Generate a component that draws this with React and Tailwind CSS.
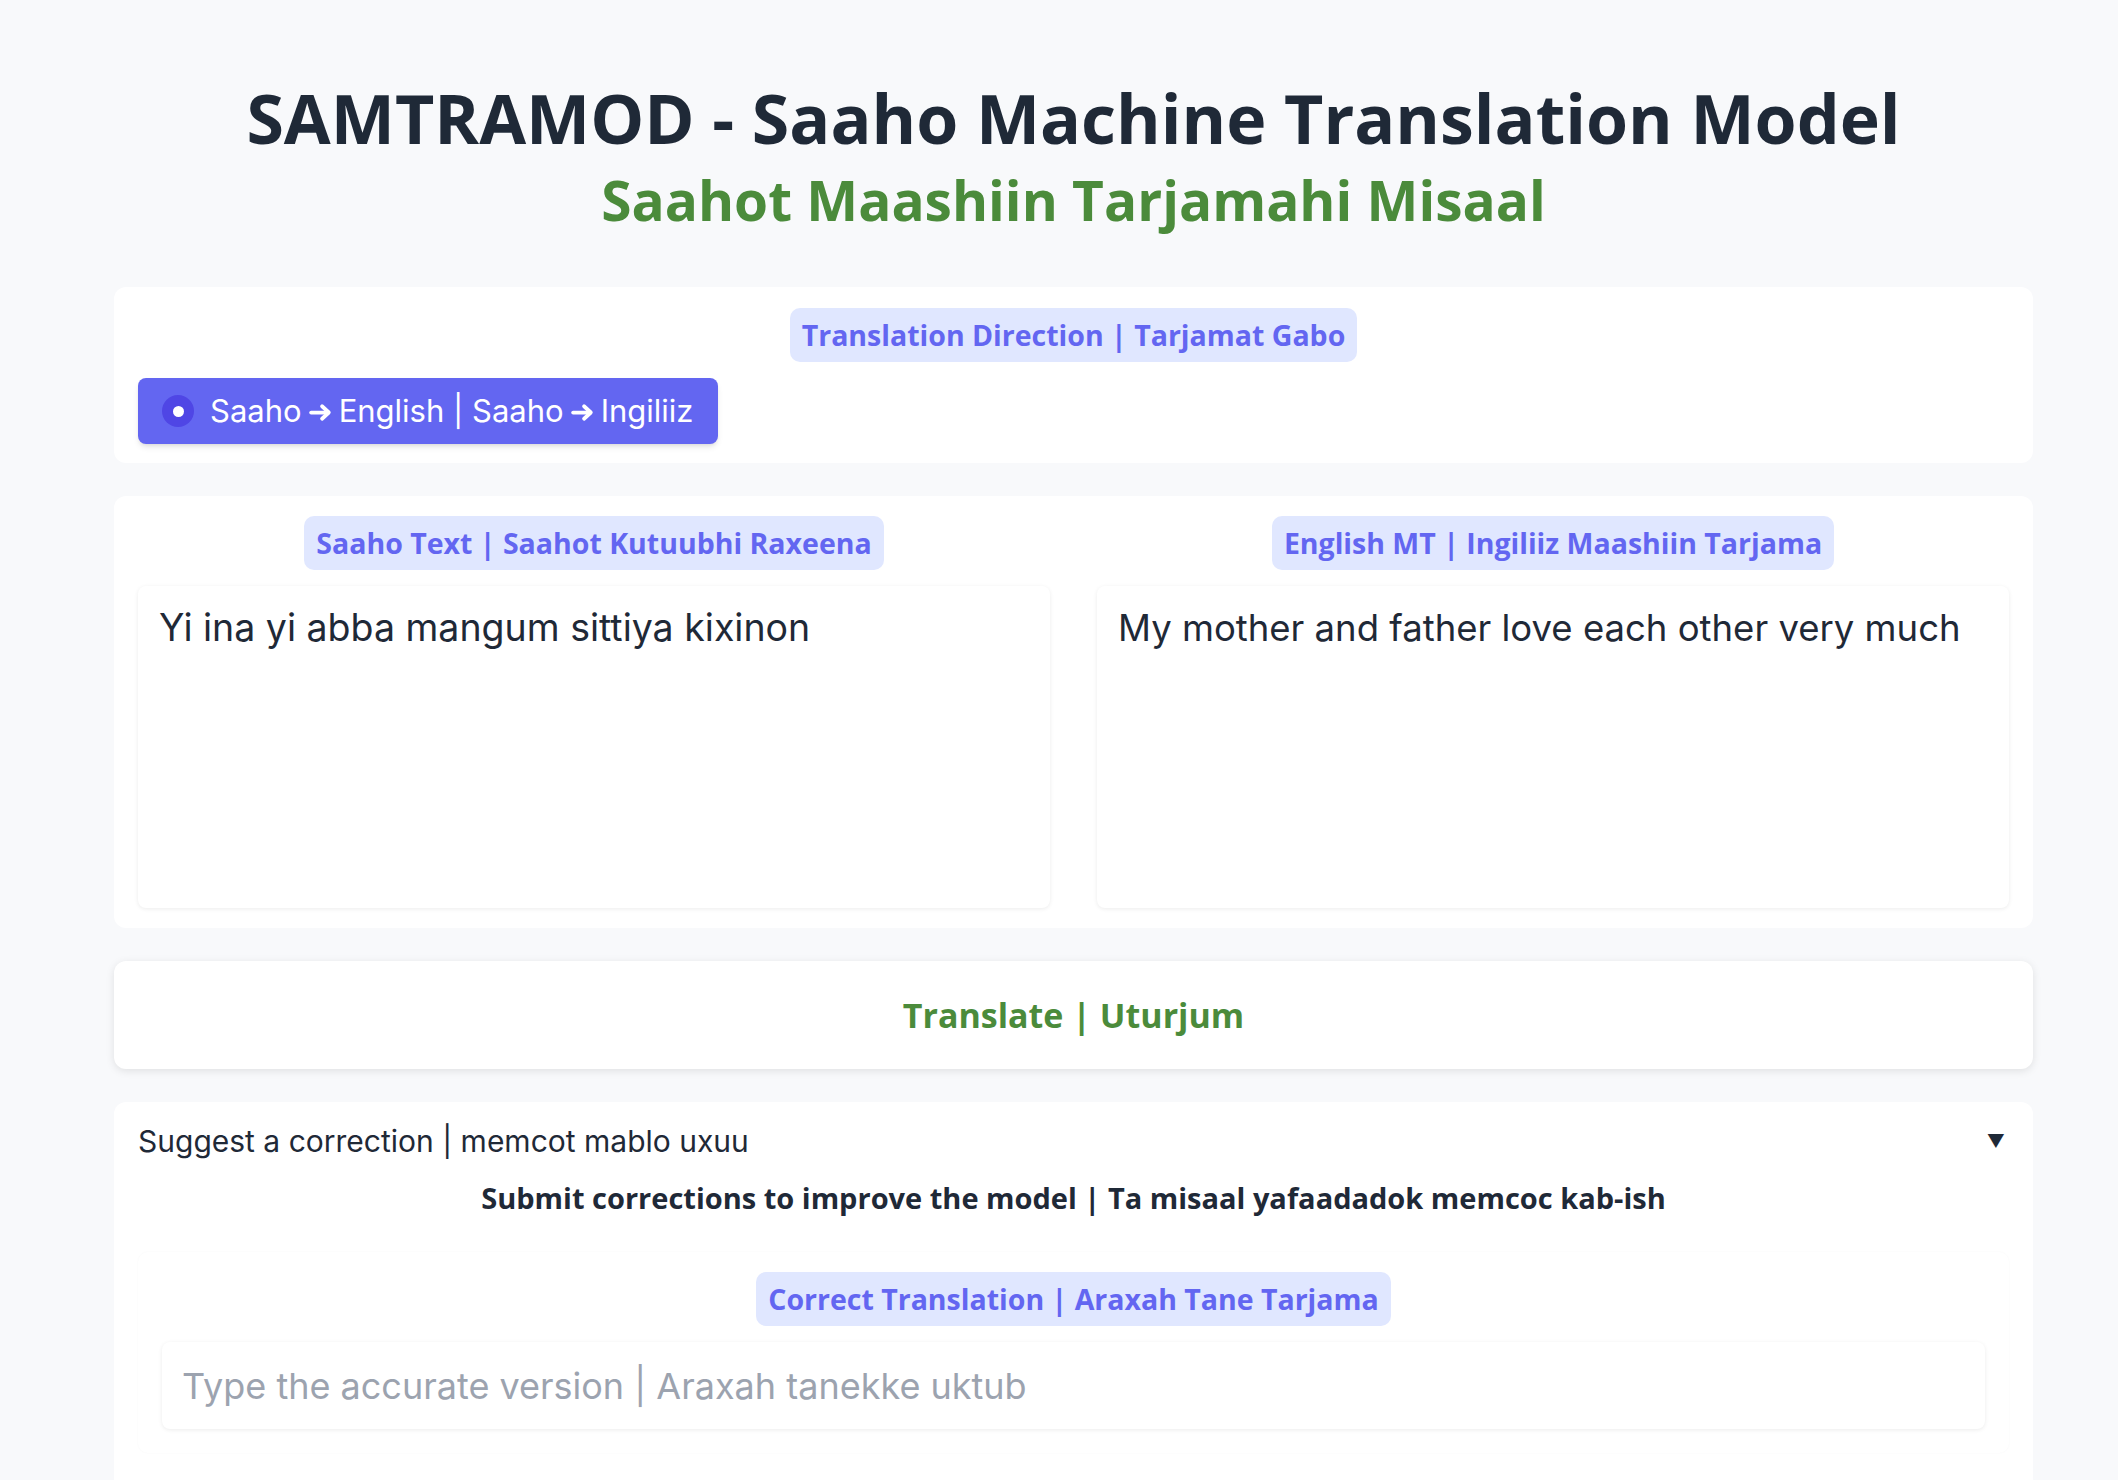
import React from 'react';

const heading = "font-['Open_Sans',sans-serif]";
const body = "font-['Inter',sans-serif]";

const Label = ({ children }) => (
  <span
    className={`${heading} inline-flex items-center h-[54px] px-[12px] rounded-[10px] bg-[#e0e7ff] text-[#6366f1] text-[28.5px] font-bold leading-none`}
  >
    {children}
  </span>
);

// heavy right arrow, like ➜
const Arrow = () => (
  <svg
    viewBox="0 0 24 20"
    className="inline-block w-[25px] h-[21px] mx-[6px] align-[-1px]"
    fill="none"
    stroke="currentColor"
    strokeWidth="3.6"
    strokeLinecap="round"
    strokeLinejoin="round"
  >
    <path d="M3 10h16" />
    <path d="M13.5 4l6.5 6-6.5 6" />
  </svg>
);

const App = () => {
  return (
    <div className={`${body} min-h-screen bg-[#f8f9fb] pl-[114px] pr-[85px] pt-[78px] pb-10 text-[#1f2937]`}>
      {/* Header */}
      <div className="text-center">
        <h1 className={`${heading} text-[68px] font-bold leading-[80px] text-[#1f2937]`}>
          SAMTRAMOD - Saaho Machine Translation Model
        </h1>
        <h2 className={`${heading} mt-[10px] text-[55px] font-bold leading-[64px] text-[#4b8b3b]`}>
          Saahot Maashiin Tarjamahi Misaal
        </h2>
      </div>

      <div className="mt-[55px] flex flex-col gap-[33px]">
        {/* Translation direction */}
        <div className="bg-white rounded-[12px] px-[24px] pt-[21px] pb-[19px]">
          <div className="flex justify-center">
            <Label>Translation Direction | Tarjamat Gabo</Label>
          </div>
          <div className="mt-[16px]">
            <label className="inline-flex items-center h-[66px] pl-[24px] pr-[25px] gap-[16px] rounded-[8px] bg-[#6366f1] text-white text-[31px] shadow-md">
              <span className="w-[32px] h-[32px] rounded-full bg-[#4f46e5] flex items-center justify-center">
                <span className="w-[11px] h-[11px] rounded-full bg-white" />
              </span>
              <span>
                Saaho<Arrow />English | Saaho<Arrow />Ingiliiz
              </span>
            </label>
          </div>
        </div>

        {/* Text panels */}
        <div className="bg-white rounded-[12px] px-[24px] py-[20px] grid grid-cols-2 gap-[47px]">
          <div className="flex flex-col">
            <div className="flex justify-center">
              <Label>Saaho Text | Saahot Kutuubhi Raxeena</Label>
            </div>
            <textarea
              readOnly
              className={`${body} mt-[16px] h-[322px] w-full resize-none rounded-[8px] bg-white px-[21px] py-[18px] text-[37.5px] leading-[48px] text-[#1f2937] shadow-[0_1px_4px_rgba(0,0,0,0.08)] outline-none`}
              defaultValue="Yi ina yi abba mangum sittiya kixinon"
            />
          </div>
          <div className="flex flex-col">
            <div className="flex justify-center">
              <Label>English MT | Ingiliiz Maashiin Tarjama</Label>
            </div>
            <textarea
              readOnly
              className={`${body} mt-[16px] h-[322px] w-full resize-none rounded-[8px] bg-white px-[21px] py-[18px] text-[36.5px] leading-[48px] text-[#1f2937] shadow-[0_1px_4px_rgba(0,0,0,0.08)] outline-none`}
              defaultValue="My mother and father love each other very much"
            />
          </div>
        </div>

        {/* Translate button */}
        <button
          className={`${heading} h-[108px] w-full rounded-[12px] bg-white text-[34px] font-bold text-[#4b8b3b] shadow-[0_2px_8px_rgba(0,0,0,0.1)]`}
        >
          Translate | Uturjum
        </button>

        {/* Correction accordion */}
        <div className="bg-white rounded-[12px] px-[24px] pt-[19px] pb-[40px]">
          <div className="flex items-center justify-between">
            <span className="text-[30px] leading-[40px]">Suggest a correction | memcot mablo uxuu</span>
            <span className="text-[18px] mr-[4px]">▼</span>
          </div>
          <p className={`${heading} mt-[17px] text-center text-[29px] font-bold leading-[40px] text-[#1f2937]`}>
            Submit corrections to improve the model | Ta misaal yafaadadok memcoc kab-ish
          </p>
          <div className="mt-[34px] rounded-[10px] px-[24px] pt-[20px] pb-[24px] shadow-[0_0_2px_rgba(0,0,0,0.04)]">
            <div className="flex justify-center">
              <Label>Correct Translation | Araxah Tane Tarjama</Label>
            </div>
            <input
              type="text"
              placeholder="Type the accurate version | Araxah tanekke uktub"
              className={`${body} mt-[16px] h-[87px] w-full rounded-[8px] bg-white px-[20px] text-[36px] text-[#1f2937] placeholder:text-[#9ca3af] shadow-[0_1px_4px_rgba(0,0,0,0.08)] outline-none`}
            />
          </div>
        </div>
      </div>
    </div>
  );
};

export default App;
